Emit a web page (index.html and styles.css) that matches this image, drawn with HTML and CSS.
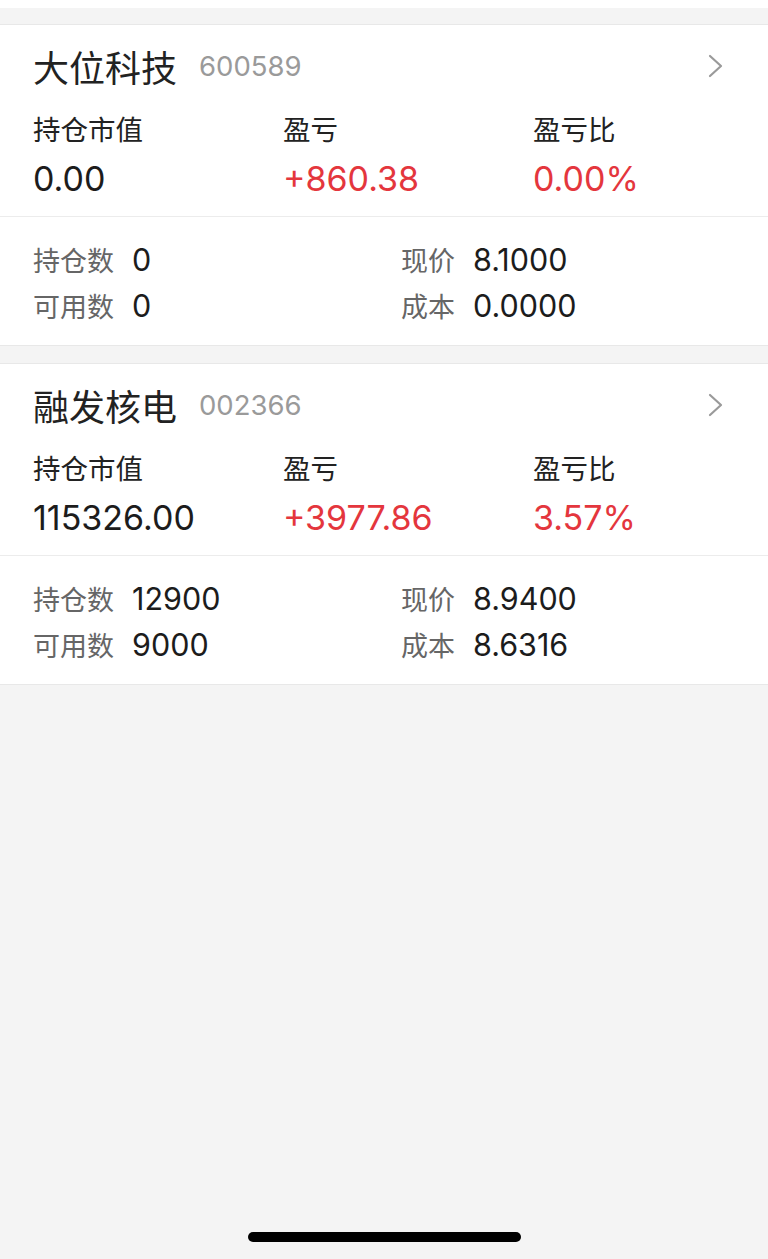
FILE: index.html
```html
<!DOCTYPE html>
<html lang="zh-CN">
<head>
<meta charset="utf-8">
<title>持仓</title>
<link rel="stylesheet" href="styles.css">
</head>
<body>
<div class="topbar"></div>
<div class="list">
  <section class="card">
    <div class="summary">
      <div class="head">
        <div class="name"><span class="title">大位科技</span><span class="code num">600589</span></div>
        <svg class="chev" width="16" height="24" viewBox="0 0 16 24"><path d="M2 2 L13 12 L2 22" fill="none" stroke="#9a9a9a" stroke-width="2.2" stroke-linecap="round" stroke-linejoin="round"/></svg>
      </div>
      <div class="stats">
        <div class="label">持仓市值</div><div class="label">盈亏</div><div class="label">盈亏比</div>
        <div class="value num">0.00</div><div class="value num red">+860.38</div><div class="value num red">0.00%</div>
      </div>
    </div>
    <div class="detail">
      <div class="item"><span class="dl">持仓数</span><span class="dv num">0</span></div>
      <div class="item"><span class="dl">现价</span><span class="dv num">8.1000</span></div>
      <div class="item"><span class="dl">可用数</span><span class="dv num">0</span></div>
      <div class="item"><span class="dl">成本</span><span class="dv num">0.0000</span></div>
    </div>
  </section>
  <section class="card">
    <div class="summary">
      <div class="head">
        <div class="name"><span class="title">融发核电</span><span class="code num">002366</span></div>
        <svg class="chev" width="16" height="24" viewBox="0 0 16 24"><path d="M2 2 L13 12 L2 22" fill="none" stroke="#9a9a9a" stroke-width="2.2" stroke-linecap="round" stroke-linejoin="round"/></svg>
      </div>
      <div class="stats">
        <div class="label">持仓市值</div><div class="label">盈亏</div><div class="label">盈亏比</div>
        <div class="value num">115326.00</div><div class="value num red">+3977.86</div><div class="value num red">3.57%</div>
      </div>
    </div>
    <div class="detail">
      <div class="item"><span class="dl">持仓数</span><span class="dv num">12900</span></div>
      <div class="item"><span class="dl">现价</span><span class="dv num">8.9400</span></div>
      <div class="item"><span class="dl">可用数</span><span class="dv num">9000</span></div>
      <div class="item"><span class="dl">成本</span><span class="dv num">8.6316</span></div>
    </div>
  </section>
</div>
<div class="home-bar"></div>
</body>
</html>
```
FILE: styles.css
```css
html, body {
  margin: 0;
  padding: 0;
}
body {
  width: 768px;
  height: 1259px;
  background: #f4f4f4;
  font-family: "Liberation Sans", "Noto Sans CJK SC", sans-serif;
  color: #222;
  position: relative;
  overflow: hidden;
}
.num {
  font-family: Inter, "Liberation Sans", sans-serif;
}
.topbar {
  height: 8px;
  background: #fff;
}
.list {
  padding-top: 16px;
  display: flex;
  flex-direction: column;
  gap: 17px;
}
.card {
  background: #fff;
  border-top: 1px solid #e8e8e8;
  border-bottom: 1px solid #e8e8e8;
}
.summary {
  padding: 14px 0 15px 33px;
  border-bottom: 1px solid #ececec;
}
.head {
  display: flex;
  align-items: center;
  justify-content: space-between;
  height: 54px;
  padding-right: 44px;
}
.name {
  display: flex;
  align-items: center;
}
.title {
  font-size: 36px;
  color: #222;
}
.code {
  font-size: 27.5px;
  color: #9a9a9a;
  margin-left: 22px;
}
.chev {
  display: block;
}
.stats {
  display: grid;
  grid-template-columns: 250px 250px 1fr;
  grid-template-rows: 36px 44px;
  row-gap: 8px;
  margin-top: 20px;
}
.label {
  font-size: 27.5px;
  line-height: 36px;
  color: #222;
}
.value {
  font-size: 34px;
  line-height: 44px;
  color: #1c1c1c;
}
.red {
  color: #e4363d;
}
.detail {
  display: grid;
  grid-template-columns: 368px 1fr;
  grid-auto-rows: 46px;
  padding: 19px 0 17px 33px;
}
.item {
  display: flex;
  align-items: center;
  gap: 18px;
}
.dl {
  font-size: 27px;
  color: #666;
}
.dv {
  font-size: 30.5px;
  color: #1c1c1c;
}
.home-bar {
  position: absolute;
  left: 248px;
  top: 1232px;
  width: 273px;
  height: 10px;
  border-radius: 5px;
  background: #000;
}
```
